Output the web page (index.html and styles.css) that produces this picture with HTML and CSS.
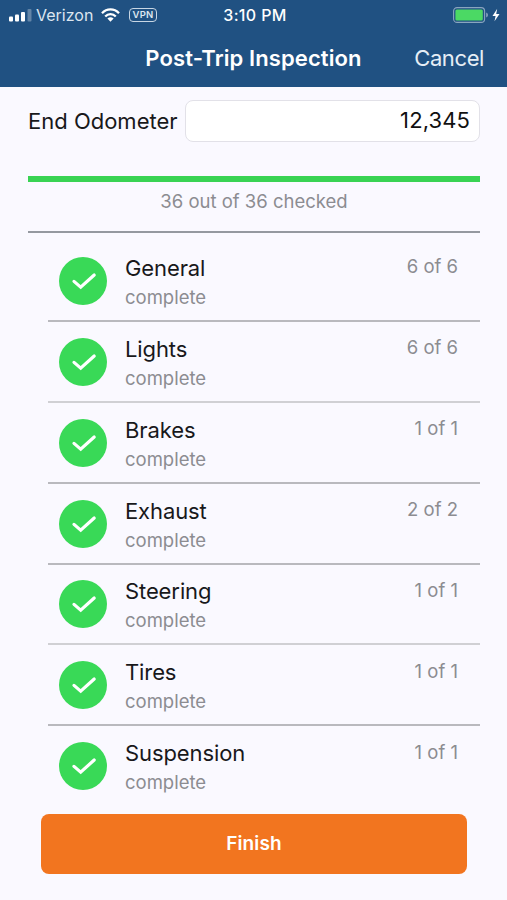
FILE: index.html
```html
<!DOCTYPE html>
<html lang="en">
<head>
<meta charset="utf-8">
<title>Post-Trip Inspection</title>
<link rel="stylesheet" href="styles.css">
</head>
<body>
<svg class="defs" width="0" height="0" aria-hidden="true">
  <symbol id="check" viewBox="0 0 48 48"><circle cx="24" cy="24" r="24" fill="#39d957"/><path d="M15 24.400 L21.700 30.200 L35.200 18" fill="none" stroke="#fff" stroke-width="3.200" stroke-linecap="round" stroke-linejoin="miter"/></symbol>
</svg>
<header class="top">
  <div class="status">
    <div class="carrier">
      <svg class="signal" width="23" height="13" viewBox="0 0 23 13" fill="#fff"><rect x="0" y="7.500" width="4" height="5" rx="1"/><rect x="6" y="5.500" width="4" height="7" rx="1"/><rect x="12" y="3" width="4" height="9.500" rx="1"/><rect x="18.500" y="0" width="4" height="12.500" rx="1" opacity=".3"/></svg>
      <span class="network">Verizon</span>
      <svg class="wifi" width="19" height="14" viewBox="0 0 19 14" fill="none" stroke="#fff" stroke-width="2.300"><path d="M1 5.200 C5.800 .2 13.200 .2 18 5.200"/><path d="M4.200 8.500 C7.200 5.300 11.800 5.300 14.800 8.500"/><path d="M6.400 10.600 Q9.500 7.900 12.600 10.600 L9.500 13.700Z" fill="#fff" stroke="none"/></svg>
      <span class="vpn">VPN</span>
    </div>
    <span class="time">3:10 PM</span>
    <svg class="battery" width="48" height="16" viewBox="0 0 48 16"><rect x=".6" y=".6" width="31" height="14.800" rx="3.500" fill="none" stroke="#8aa5bf" stroke-width="1.100"/><rect x="2.400" y="2.500" width="27.400" height="11" rx="1.500" fill="#4bd964"/><path d="M33.200 5.500 Q35 6.300 35 8 Q35 9.700 33.200 10.500Z" fill="#8aa5bf"/><path d="M44.200 1.800 L39.500 8.900 H42.600 L41.500 14.200 L46.500 7 H43.200Z" fill="#fff"/></svg>
  </div>
  <div class="nav"><h1>Post-Trip Inspection</h1><span class="cancel">Cancel</span></div>
</header>
<main>
  <div class="odometer"><label for="odo">End Odometer</label><input id="odo" value="12,345"></div>
  <div class="bar"></div>
  <p class="checked">36 out of 36 checked</p>
  <ul class="list">
    <li><svg class="tick"><use href="#check"/></svg><div class="text"><h2>General</h2><p>complete</p></div><span class="count">6 of 6</span></li>
    <li><svg class="tick"><use href="#check"/></svg><div class="text"><h2>Lights</h2><p>complete</p></div><span class="count">6 of 6</span></li>
    <li><svg class="tick"><use href="#check"/></svg><div class="text"><h2>Brakes</h2><p>complete</p></div><span class="count">1 of 1</span></li>
    <li><svg class="tick"><use href="#check"/></svg><div class="text"><h2>Exhaust</h2><p>complete</p></div><span class="count">2 of 2</span></li>
    <li><svg class="tick"><use href="#check"/></svg><div class="text"><h2>Steering</h2><p>complete</p></div><span class="count">1 of 1</span></li>
    <li><svg class="tick"><use href="#check"/></svg><div class="text"><h2>Tires</h2><p>complete</p></div><span class="count">1 of 1</span></li>
    <li><svg class="tick"><use href="#check"/></svg><div class="text"><h2>Suspension</h2><p>complete</p></div><span class="count">1 of 1</span></li>
  </ul>
  <button class="finish">Finish</button>
</main>
</body>
</html>
```
FILE: styles.css
```css
* { box-sizing: border-box; margin: 0; padding: 0; }
body { width: 507px; height: 900px; overflow: hidden; background: #faf9ff; font-family: Inter, "Liberation Sans", sans-serif; color: #18181b; }
.defs { display: block; height: 0; }
.top { height: 87px; background: #205182; color: #fff; }
.status { height: 30px; display: grid; grid-template-columns: 1fr auto 1fr; align-items: center; padding: 0 6px 0 9px; }
.carrier { display: flex; align-items: center; }
.network { font-size: 16px; line-height: 20px; margin-left: 4px; width: 57px; color: #dce6f0; }
.wifi { margin-left: 8px; }
.vpn { margin-left: 9px; width: 28px; height: 14px; border: 1.500px solid #c8d6e4; border-radius: 4px; font-size: 9.500px; font-weight: 600; line-height: 12px; text-align: center; color: #dce6f0; letter-spacing: .2px; }
.time { font-size: 16px; font-weight: 500; line-height: 20px; letter-spacing: .35px; }
.battery { justify-self: end; }
.nav { height: 57px; display: grid; grid-template-columns: 1fr auto 1fr; align-items: center; padding: 0 23px 2px; }
h1 { grid-column: 2; font-size: 22px; font-weight: 600; line-height: 28px; letter-spacing: .1px; }
.cancel { justify-self: end; font-size: 22px; line-height: 28px; letter-spacing: -.4px; color: #e6eef6; }
main { padding: 13px 27px 0 28px; }
.odometer { height: 42px; display: flex; align-items: center; justify-content: space-between; }
label { font-size: 22px; white-space: nowrap; }
input { width: 295px; height: 42px; border: 1px solid #e2e1e8; border-radius: 8px; background: #fff; padding: 0 9px 2px; font: 22px Inter, "Liberation Sans", sans-serif; letter-spacing: .1px; color: #111; text-align: right; }
.bar { height: 6px; margin-top: 34px; background: #39d353; }
.checked { height: 51px; padding-top: 7px; border-bottom: 2px solid #9599a0; font-size: 18.500px; line-height: 24px; text-align: center; color: #8c8c91; }
.list { list-style: none; margin: 8.200px 0 0 20px; }
li { height: 80.860px; display: flex; align-items: flex-start; padding: 15.800px 22px 0 11px; border-bottom: 2px solid #b9b9be; }
li:nth-child(3n + 2) { border-color: #d0d0d4; }
li:last-child { border: 0; height: 87.600px; }
.tick { width: 48px; height: 48px; flex: none; }
.text { flex: 1; margin-left: 18px; }
h2 { font-size: 22px; font-weight: 400; line-height: 28px; margin-top: -3px; letter-spacing: -.1px; }
.text p { font-size: 18.500px; line-height: 24px; margin-top: 3px; color: #8c8c91; }
.count { font-size: 18.500px; line-height: 24px; margin-top: -2.600px; color: #8c8c91; }
.finish { display: block; width: 426px; height: 60px; margin-left: 13px; border: 0; border-radius: 8px; background: #f2751f; color: #fff; font: 600 19px/24px Inter, "Liberation Sans", sans-serif; letter-spacing: .15px; }
```
